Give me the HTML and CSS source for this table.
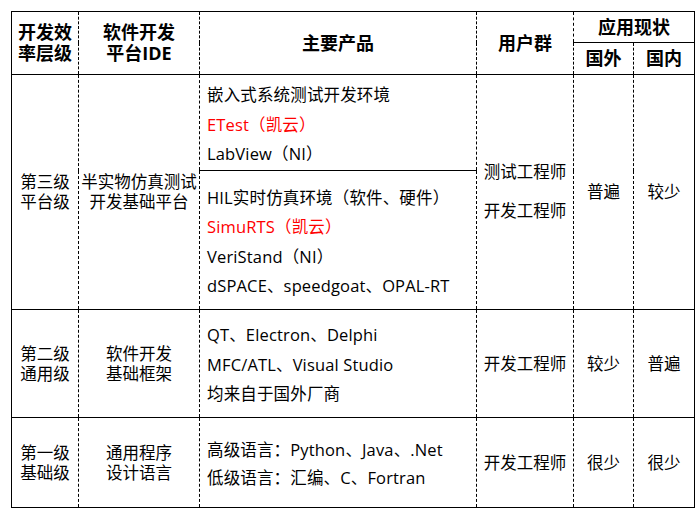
FILE: index.html
```html
<!DOCTYPE html>
<html lang="zh-CN">
<head>
<meta charset="utf-8">
<link rel="stylesheet" href="styles.css">
</head>
<body>
<table class="grid">
  <colgroup>
    <col class="c1"><col class="c2"><col class="c3"><col class="c4"><col class="c5"><col class="c6">
  </colgroup>
  <tr class="h1">
    <th rowspan="2" class="hd">开发效<br>率层级</th>
    <th rowspan="2" class="hd">软件开发<br>平台IDE</th>
    <th rowspan="2" class="hd">主要产品</th>
    <th rowspan="2" class="hd">用户群</th>
    <th colspan="2" class="hd sub">应用现状</th>
  </tr>
  <tr class="h2">
    <th class="hd">国外</th>
    <th class="hd">国内</th>
  </tr>
  <tr class="r1a">
    <td rowspan="2" class="ctr">第三级<br>平台级</td>
    <td rowspan="2" class="ctr">半实物仿真测试<br>开发基础平台</td>
    <td class="prod split">嵌入式系统测试开发环境<br><span class="red">ETest（凯云）</span><br>LabView（NI）</td>
    <td rowspan="2" class="ctr users">测试工程师<br>开发工程师</td>
    <td rowspan="2" class="ctr">普遍</td>
    <td rowspan="2" class="ctr">较少</td>
  </tr>
  <tr class="r1b">
    <td class="prod low">HIL实时仿真环境（软件、硬件）<br><span class="red">SimuRTS（凯云）</span><br>VeriStand（NI）<br>dSPACE、speedgoat、OPAL-RT</td>
  </tr>
  <tr class="r2">
    <td class="ctr">第二级<br>通用级</td>
    <td class="ctr">软件开发<br>基础框架</td>
    <td class="prod">QT、Electron、Delphi<br>MFC/ATL、Visual Studio<br>均来自于国外厂商</td>
    <td class="ctr">开发工程师</td>
    <td class="ctr">较少</td>
    <td class="ctr">普遍</td>
  </tr>
  <tr class="r3">
    <td class="ctr">第一级<br>基础级</td>
    <td class="ctr">通用程序<br>设计语言</td>
    <td class="prod">高级语言：Python、Java、.Net<br>低级语言：汇编、C、Fortran</td>
    <td class="ctr">开发工程师</td>
    <td class="ctr">很少</td>
    <td class="ctr">很少</td>
  </tr>
</table>
</body>
</html>
```
FILE: styles.css
```css
html, body {
  margin: 0;
  padding: 0;
  background: #fff;
}
body {
  padding: 11px 0 0 11px;
  font-family: "Open Sans", "Noto Sans CJK SC", sans-serif;
  color: #000;
}
.grid {
  border-collapse: collapse;
  table-layout: fixed;
  width: 683px;
  border: 1px solid #000;
}
.c1 { width: 67px; }
.c2 { width: 121px; }
.c3 { width: 277px; }
.c4 { width: 97px; }
.c5 { width: 60px; }
.c6 { width: 61px; }
.grid th, .grid td {
  border-left: 1px dashed #000;
  border-right: 1px dashed #000;
  border-top: 1px solid #000;
  border-bottom: 1px solid #000;
  padding: 0;
  vertical-align: middle;
}
.hd {
  font-family: "Open Sans", "Noto Sans CJK SC", sans-serif;
  font-weight: 700;
  font-size: 18px;
  line-height: 21px;
  text-align: center;
}
.h1 { height: 31px; }
.h2 { height: 32px; }
.r1a { height: 96px; }
.r1b { height: 139px; }
.r2 { height: 108px; }
.r3 { height: 90px; }
.ctr {
  font-size: 16.5px;
  line-height: 20px;
  text-align: center;
  white-space: nowrap;
}
.users {
  line-height: 39px;
  padding-bottom: 3px !important;
}
.prod {
  font-size: 16.5px;
  line-height: 29.5px;
  text-align: left;
  padding-left: 7px !important;
  white-space: nowrap;
  letter-spacing: 0.15px;
}
.split { padding-top: 4px !important; }
.low { padding-top: 3px !important; }
.r3 .prod { line-height: 28.5px; padding-top: 3px !important; }
.r2 .prod { padding-top: 2px !important; }
.red { color: #ff0000; }
```
